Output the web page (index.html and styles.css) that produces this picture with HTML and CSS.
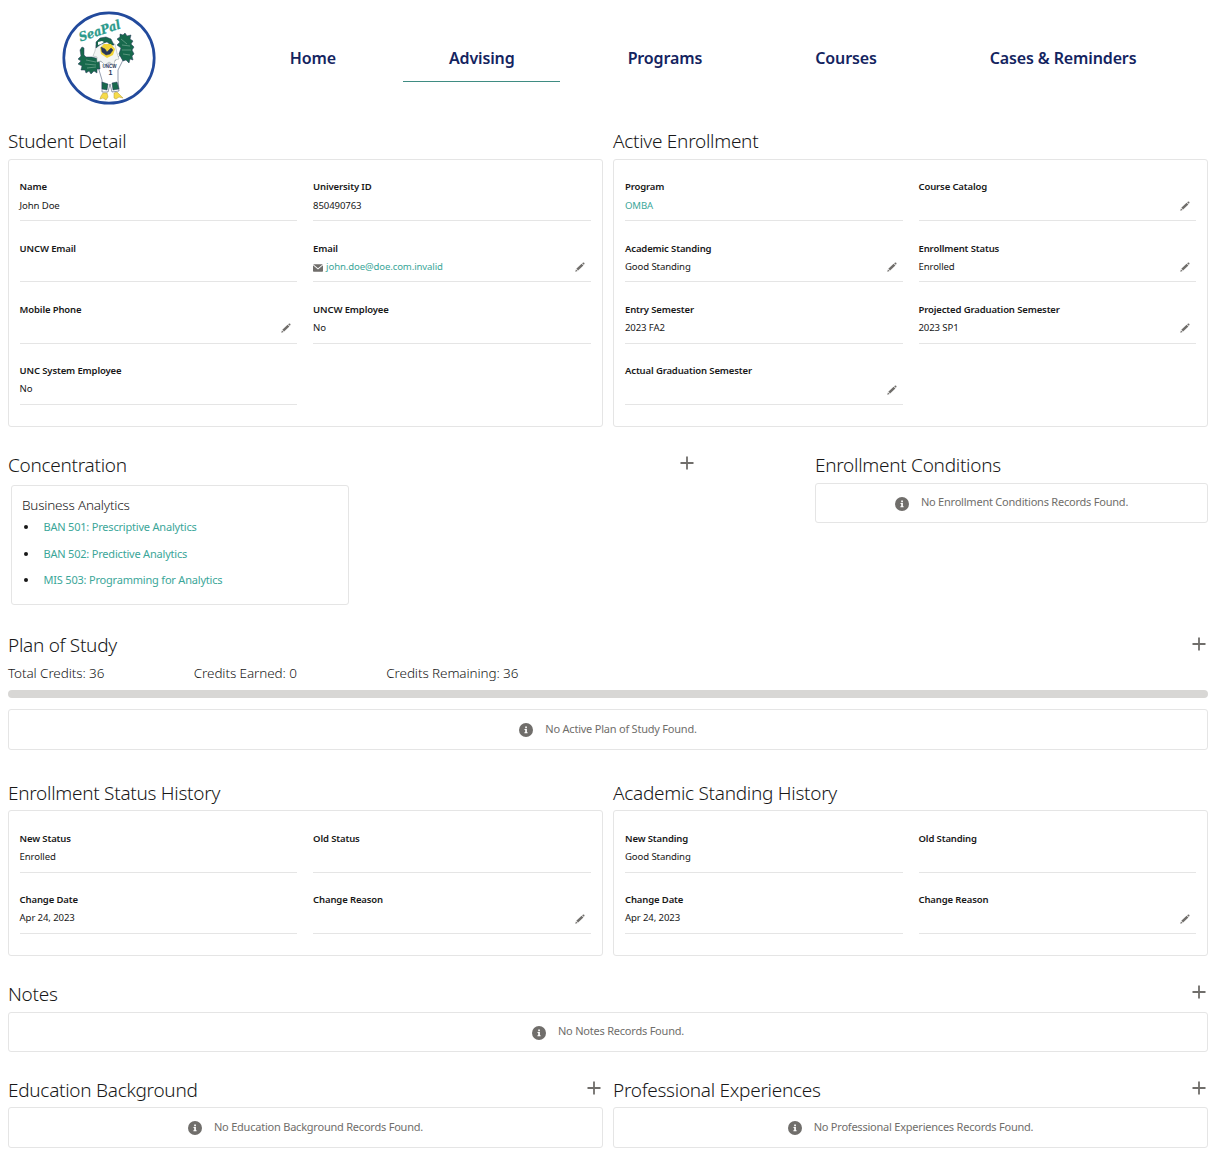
FILE: index.html
```html
<!DOCTYPE html>
<html lang="en">
<head>
<meta charset="utf-8">
<title>SeaPal Advising</title>
<link rel="stylesheet" href="styles.css">
</head>
<body>
<svg class="sprite" aria-hidden="true">
  <symbol id="pencil" viewBox="0 0 10 10"><path d="M.3 9.700 .9 7.400 2.700 9.100zM1.300 6.800 6.600 1.700 8.400 3.400 3.100 8.600zM7.100 1.300 7.800 .7Q8.500 .1 9.200 .8 9.900 1.500 9.300 2.200L8.700 2.800z"/></symbol>
  <symbol id="plus" viewBox="0 0 14 14"><path d="M6.100.5h1.800v5.600h5.600v1.800H7.900v5.600H6.100V7.900H.5V6.100h5.600z"/></symbol>
  <symbol id="info" viewBox="0 0 14 14"><circle cx="7" cy="7" r="7"/><path fill="#fff" d="M6.200 3.600h1.700v1.600H6.200zM5.500 6H7.900v3.300h.7v.9H5.400v-.9H6.200V6.900h-.7z"/></symbol>
  <symbol id="mail" viewBox="0 0 11 8"><path d="M.2 0h10.600L5.500 4.400zM0 .9 5.500 5.600 11 .9V7.200Q11 8 10.200 8H.8Q0 8 0 7.200z"/></symbol>
</svg>

<header class="topbar">
  <svg class="logo" viewBox="0 0 94 94" role="img" aria-label="SeaPal">
    <circle cx="47" cy="47" r="45.200" fill="#fff" stroke="#224a9c" stroke-width="2.700"/>
    <text class="logo-text" transform="translate(18.500 30.500) rotate(-18)" textLength="43" lengthAdjust="spacingAndGlyphs">SeaPal</text>
    <g stroke="#27365a" stroke-width=".5" stroke-linejoin="round">
      <path fill="#fff" d="M36 49 42 52 51 52 58 44 61 49 56 59 56 69 57 80 50 81 48 73 46 81 40 81 40 69 37 59z"/>
      <path fill="#17694c" d="M57 43 59 37 55 34 58 31 55 28 58 26 58 23 61 24 63 22 65 25 69 24 68 28 71 30 69 33 72 36 70 39 72 43 70 45 71 49 68 48 67 52 64 49 61 50z"/>
      <path fill="#17694c" d="M37 48 30 46 24 46 22 44 22 37 20 36 18 39 19 45 16 48 19 50 16 53 20 55 19 59 23 59 24 62 27 60 29 63 32 60 35 62 35 58 38 58z"/>
      <path fill="none" stroke="#9bc1ad" d="m24 49 10 2m-11 2 11 1m-9 3 9-1M59 28l6 5m-5 1 8 1m-8 4 9 0m-8 4 7 1"/>
      <path fill="#17694c" d="m40 71 6 2-1 6-5-1zM50 72l5-1 2 7-6 1z"/>
      <path fill="#f3f5f4" stroke="#9aa6a6" d="m34 34-1 6-2 5 4 1 0 5 4-1 4 4 4-3 5 3 1-5 4-1-2-6-2-9z"/>
      <path fill="#17694c" d="M34 37 34 31 38 27 44 26 49 28 52 34 49 34 45 31 39 33z"/>
      <path fill="#f2d438" stroke="none" d="m38 37 4-4 7 0 4 5-2 6-6 3-6-4z"/>
      <path fill="#27365a" d="m39 36 4 2 2 3 4-4 2 2-3 4-4 1-4-3z"/>
      <path fill="#fff" stroke="none" d="m36 31 4-1 2 1-3 2-3 1z"/>
      <path fill="#f6db4b" stroke="#b69b35" d="m41 82 4 0 1 4-2 3-3-2-3 1 1-3zm11 0 3-1 3 3 3 3-4-1-3 2-2-1z"/>
    </g>
    <text class="jersey" x="40.500" y="57">UNCW</text><text class="jersey number" x="46.500" y="64">1</text>
  </svg>
  <nav class="tabs">
    <a class="tab">Home</a><a class="tab active">Advising</a><a class="tab">Programs</a><a class="tab">Courses</a><a class="tab">Cases &amp; Reminders</a>
  </nav>
</header>

<main>
  <div class="pair details">
    <section>
      <h2>Student Detail</h2>
      <div class="card fields">
        <div class="field"><b>Name</b><span>John Doe</span></div>
        <div class="field"><b>University ID</b><span>850490763</span></div>
        <div class="field"><b>UNCW Email</b><span></span></div>
        <div class="field"><b>Email</b><span class="email"><svg class="mail"><use href="#mail"/></svg><a>john.doe@doe.com.invalid</a></span><svg class="pencil"><use href="#pencil"/></svg></div>
        <div class="field"><b>Mobile Phone</b><span></span><svg class="pencil"><use href="#pencil"/></svg></div>
        <div class="field"><b>UNCW Employee</b><span>No</span></div>
        <div class="field"><b>UNC System Employee</b><span>No</span></div>
      </div>
    </section>
    <section>
      <h2>Active Enrollment</h2>
      <div class="card fields">
        <div class="field"><b>Program</b><span><a>OMBA</a></span></div>
        <div class="field"><b>Course Catalog</b><span></span><svg class="pencil"><use href="#pencil"/></svg></div>
        <div class="field"><b>Academic Standing</b><span>Good Standing</span><svg class="pencil"><use href="#pencil"/></svg></div>
        <div class="field"><b>Enrollment Status</b><span>Enrolled</span><svg class="pencil"><use href="#pencil"/></svg></div>
        <div class="field"><b>Entry Semester</b><span>2023 FA2</span></div>
        <div class="field"><b>Projected Graduation Semester</b><span>2023 SP1</span><svg class="pencil"><use href="#pencil"/></svg></div>
        <div class="field"><b>Actual Graduation Semester</b><span></span><svg class="pencil"><use href="#pencil"/></svg></div>
      </div>
    </section>
  </div>

  <div class="concentration-row">
    <section class="concentration">
      <div class="heading"><h2>Concentration</h2><svg class="plus"><use href="#plus"/></svg></div>
      <div class="card courses">
        <h3>Business Analytics</h3>
        <ul>
          <li><a>BAN 501: Prescriptive Analytics</a></li>
          <li><a>BAN 502: Predictive Analytics</a></li>
          <li><a>MIS 503: Programming for Analytics</a></li>
        </ul>
      </div>
    </section>
    <section class="conditions">
      <h2>Enrollment Conditions</h2>
      <div class="card empty"><svg class="info"><use href="#info"/></svg><span>No Enrollment Conditions Records Found.</span></div>
    </section>
  </div>

  <section class="plan">
    <div class="heading"><h2>Plan of Study</h2><svg class="plus"><use href="#plus"/></svg></div>
    <div class="credits"><span>Total Credits: 36</span><span>Credits Earned: 0</span><span>Credits Remaining: 36</span></div>
    <div class="progress"></div>
    <div class="card empty tall"><svg class="info"><use href="#info"/></svg><span>No Active Plan of Study Found.</span></div>
  </section>

  <div class="pair history">
    <section>
      <h2>Enrollment Status History</h2>
      <div class="card fields">
        <div class="field"><b>New Status</b><span>Enrolled</span></div>
        <div class="field"><b>Old Status</b><span></span></div>
        <div class="field"><b>Change Date</b><span>Apr 24, 2023</span></div>
        <div class="field"><b>Change Reason</b><span></span><svg class="pencil"><use href="#pencil"/></svg></div>
      </div>
    </section>
    <section>
      <h2>Academic Standing History</h2>
      <div class="card fields">
        <div class="field"><b>New Standing</b><span>Good Standing</span></div>
        <div class="field"><b>Old Standing</b><span></span></div>
        <div class="field"><b>Change Date</b><span>Apr 24, 2023</span></div>
        <div class="field"><b>Change Reason</b><span></span><svg class="pencil"><use href="#pencil"/></svg></div>
      </div>
    </section>
  </div>

  <section class="notes">
    <div class="heading"><h2>Notes</h2><svg class="plus"><use href="#plus"/></svg></div>
    <div class="card empty"><svg class="info"><use href="#info"/></svg><span>No Notes Records Found.</span></div>
  </section>

  <div class="pair background">
    <section>
      <div class="heading"><h2>Education Background</h2><svg class="plus"><use href="#plus"/></svg></div>
      <div class="card empty tall"><svg class="info"><use href="#info"/></svg><span>No Education Background Records Found.</span></div>
    </section>
    <section>
      <div class="heading"><h2>Professional Experiences</h2><svg class="plus"><use href="#plus"/></svg></div>
      <div class="card empty tall"><svg class="info"><use href="#info"/></svg><span>No Professional Experiences Records Found.</span></div>
    </section>
  </div>
</main>
</body>
</html>
```
FILE: styles.css
```css
* { box-sizing: border-box; }
body {
  margin: 0;
  padding: 0 16px 0 8px;
  height: 1166px;
  overflow: hidden;
  background: #fff;
  color: #181818;
  font: 9.6px/14px "Noto Sans", "Open Sans", sans-serif;
  letter-spacing: -.12px;
}
svg { display: block; flex: none; fill: #706e6b; }
.sprite { display: none; }
a { color: #3ba699; }

.topbar { display: flex; height: 129px; padding: 11px 0 0 54px; }
.logo { width: 94px; height: 94px; letter-spacing: 0; }
.logo-text { font: italic bold 12.5px "DejaVu Serif", serif; fill: #2b9a8b; stroke: #2b9a8b; stroke-width: .3px; }
.jersey { font: bold 4.5px "Liberation Sans", sans-serif; fill: #27365a; }
.jersey.number { font-size: 7px; }
.tabs { display: flex; gap: 21.7px; margin-left: 88px; height: 71px; }
.tab {
  padding: 35px 45.7px 0;
  color: #14245f;
  font-size: 16px;
  font-weight: 600;
  line-height: 24px;
  letter-spacing: -.13px;
  white-space: nowrap;
}
.tab.active { border-bottom: 1px solid #3f8c82; }

h2 { margin: 0; height: 30px; font-size: 19px; font-weight: 300; line-height: 25px; letter-spacing: -.28px; white-space: nowrap; }
h3 { margin: 0; font-size: 13.5px; font-weight: 300; line-height: 18px; letter-spacing: -.2px; }
.pair { display: grid; grid-template-columns: 595px 595px; gap: 10px; }
.history h2, .background h2 { height: 29px; }
.heading { display: flex; justify-content: space-between; }
.plus { width: 14px; height: 14px; margin: 3px 2px 0 0; }
.plan .plus { margin-top: 4px; }
.card { border: 1px solid #e5e5e5; border-radius: 3px; }

.fields {
  display: grid;
  grid-template-columns: 1fr 1fr;
  grid-auto-rows: 61.2px;
  column-gap: 16px;
  align-content: start;
  padding: 0 11.4px 21px 10.6px;
}
section + section .fields { padding-right: 11px; padding-left: 11px; }
.details .fields { height: 268px; }
.history .fields { height: 146px; padding-top: .4px; }
.field {
  display: grid;
  grid-template-columns: 1fr auto;
  grid-template-rows: 18.55px 14px;
  padding-top: 20.35px;
  border-bottom: 1px solid #e5e5e5;
}
.field b { grid-column: 1 / 3; font-size: 9.5px; font-weight: 600; letter-spacing: -.13px; }
.field .pencil { width: 10px; height: 10px; margin: 2.1px 6px 0 0; }
.email { display: flex; gap: 3px; }
.mail { width: 10px; height: 8px; margin-top: 4px; }

.concentration-row { display: grid; grid-template-columns: 688px 393px; justify-content: space-between; margin-top: 26px; height: 180px; }
.courses { width: 338px; height: 120px; margin: 2px 0 0 3px; padding: 10px; }
ul { margin: 0; padding: 0 0 0 2px; font-size: 11px; letter-spacing: -.2px; list-style: none; }
li { display: flex; align-items: center; gap: 15.5px; height: 26.5px; line-height: 26px; }
li::before { content: ""; width: 4px; height: 4px; border-radius: 50%; background: #181818; }

.empty { display: flex; justify-content: center; gap: 12px; height: 40px; padding-top: 11px; color: #706e6b; font-size: 11px; letter-spacing: -.22px; }
.info { width: 14px; height: 14px; margin-top: 2px; }
.empty.tall { height: 41px; padding-top: 12px; }
.tall .info { margin-top: 1px; }

.plan { height: 148px; }
.credits { display: flex; gap: 89.5px; height: 27px; font-size: 13.5px; font-weight: 300; line-height: 20px; letter-spacing: -.1px; }
.progress { height: 8px; margin-bottom: 11px; border-radius: 4px; background: #d8d7d5; }
.notes { margin-top: 26px; height: 96px; }
```
